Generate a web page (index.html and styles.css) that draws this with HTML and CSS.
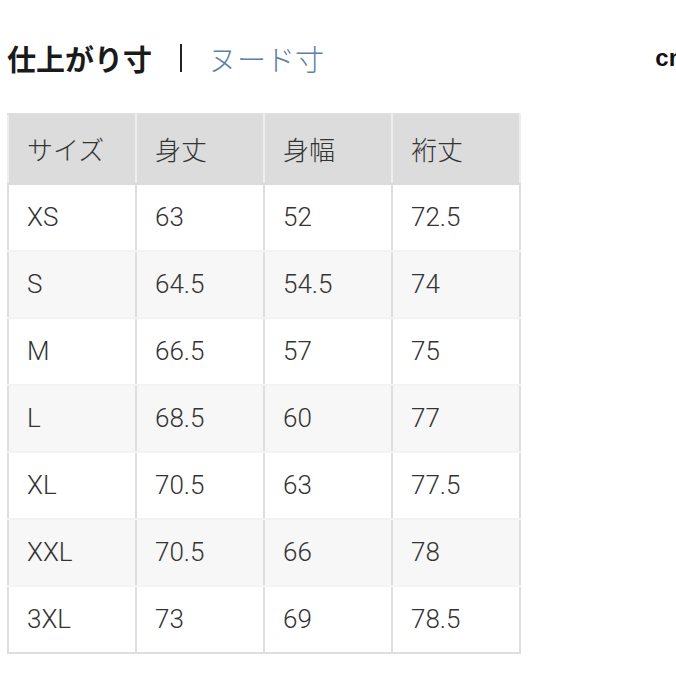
FILE: index.html
```html
<!DOCTYPE html>
<html lang="ja">
<head>
<meta charset="utf-8">
<link rel="stylesheet" href="styles.css">
</head>
<body>
<div class="page">
  <div class="tabs">
    <span class="tab active">仕上がり寸</span>
    <span class="sep"></span>
    <span class="tab">ヌード寸</span>
    <span class="unit">cm</span>
  </div>
  <table class="size-table">
    <thead>
      <tr><th>サイズ</th><th>身丈</th><th>身幅</th><th>裄丈</th></tr>
    </thead>
    <tbody>
      <tr><td>XS</td><td>63</td><td>52</td><td>72.5</td></tr>
      <tr><td>S</td><td>64.5</td><td>54.5</td><td>74</td></tr>
      <tr><td>M</td><td>66.5</td><td>57</td><td>75</td></tr>
      <tr><td>L</td><td>68.5</td><td>60</td><td>77</td></tr>
      <tr><td>XL</td><td>70.5</td><td>63</td><td>77.5</td></tr>
      <tr><td>XXL</td><td>70.5</td><td>66</td><td>78</td></tr>
      <tr><td>3XL</td><td>73</td><td>69</td><td>78.5</td></tr>
    </tbody>
  </table>
</div>
</body>
</html>
```

FILE: styles.css
```css
html, body {
  margin: 0;
  padding: 0;
  background: #fff;
  overflow: hidden;
}
.page {
  width: 676px;
  height: 676px;
  overflow: hidden;
  font-family: Roboto, "Liberation Sans", "Noto Sans CJK JP", sans-serif;
  color: #333;
}
.tabs {
  display: flex;
  align-items: center;
  height: 40px;
  margin-top: 38px;
  padding-left: 7px;
  white-space: nowrap;
}
.tab {
  font-family: "Noto Sans CJK JP", sans-serif;
  font-size: 29px;
  line-height: 40px;
  color: #5d7ea6;
  font-weight: 300;
}
.tab.active {
  color: #1a1a1a;
  font-weight: 700;
}
.sep {
  width: 2px;
  height: 28px;
  background: #222;
  margin: 0 26px 0 28px;
}
.unit {
  margin-left: auto;
  margin-right: -14px;
  font-size: 24px;
  font-weight: 700;
  color: #111;
  font-family: "Liberation Sans", sans-serif;
}
.size-table {
  margin: 35px 0 0 7px;
  border-collapse: collapse;
  table-layout: fixed;
  width: 514px;
}
.size-table th,
.size-table td {
  width: 25%;
  text-align: left;
  padding: 0 0 2px 18px;
  font-size: 26px;
  font-weight: 300;
  color: #333;
  border: 2px solid #dedede;
}
.size-table th {
  height: 66px;
  background: #dcdcdc;
  font-family: "Noto Sans CJK JP", sans-serif;
  font-weight: 300;
  border-left-color: #eeeeee;
  border-right-color: #eeeeee;
  border-bottom-color: #dcdcdc;
}
.size-table td {
  height: 63px;
  background: #fff;
}
.size-table tbody tr:nth-child(even) td {
  background: #f7f7f7;
}
.size-table tbody tr td {
  border-top-color: #f3f3f3;
  border-bottom-color: #f3f3f3;
}
.size-table tbody tr:last-child td {
  border-bottom-color: #dedede;
}
```
